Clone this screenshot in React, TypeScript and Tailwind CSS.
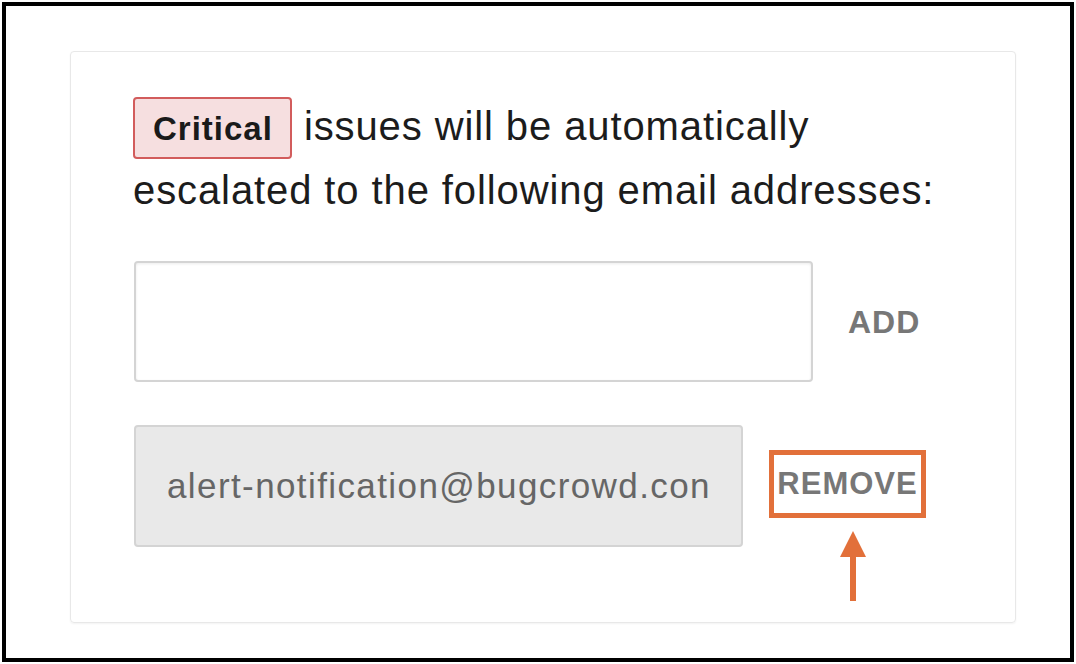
import React from 'react';

const font = { fontFamily: '"Liberation Sans", Arial, sans-serif' };

const EscalationCard: React.FC = () => {
  return (
    <div className="ml-[64px] mt-[44px] w-[946px] h-[572px] rounded-[4px] border border-[#e8e8e8] shadow-[0_1px_2px_rgba(0,0,0,0.05)] pl-[62px] pt-[43px]">
      <p className="text-[40px] leading-[63px] tracking-[0.9px] text-[#1c1c1c]">
        <span className="inline-block rounded-[4px] border-2 border-[#d25c5c] bg-[#f6dfe0] pl-[18px] pr-[17px] pt-[11px] pb-[9px] text-[33px] leading-[38px] tracking-[1px] font-bold text-[#1a1a1a]">
          Critical
        </span>{' '}
        issues will be automatically
        <br />
        escalated to the following email addresses:
      </p>

      <div className="mt-[39px] flex items-center">
        <input
          type="text"
          className="ml-px w-[679px] h-[121px] rounded-[4px] border-2 border-[#d4d4d4] bg-white shadow-[inset_0_1px_3px_rgba(0,0,0,0.08)] outline-none"
        />
        <button className="ml-[35px] text-[32px] font-bold tracking-[1px] text-[#777777]">ADD</button>
      </div>

      <div className="mt-[43px] flex items-center">
        <div className="ml-px w-[609px] h-[122px] flex items-center overflow-hidden rounded-[4px] border-2 border-[#d4d4d4] bg-[#e9e9e9] pl-[31px] text-[35px] tracking-[1.4px] text-[#666666] whitespace-nowrap">
          alert-notification@bugcrowd.con
        </div>
        <div className="relative ml-[26px] mb-[4px]">
          <button className="w-[157px] h-[68px] flex items-center justify-center border-[5px] border-[#e2703a] text-[31px] font-bold tracking-[1px] text-[#777777]">
            REMOVE
          </button>
          <svg
            className="absolute left-[71px] top-[81px]"
            width="26"
            height="70"
            viewBox="0 0 26 70"
          >
            <polygon points="13,0 26,26 0,26" fill="#e2703a" />
            <rect x="10" y="24" width="6" height="46" fill="#e2703a" />
          </svg>
        </div>
      </div>
    </div>
  );
};

const App: React.FC = () => {
  return (
    <div className="w-[1076px] h-[664px] bg-white p-[2px]" style={font}>
      <div className="w-[1072px] h-[660px] border-[4px] border-black pt-px">
        <EscalationCard />
      </div>
    </div>
  );
};

export default App;
